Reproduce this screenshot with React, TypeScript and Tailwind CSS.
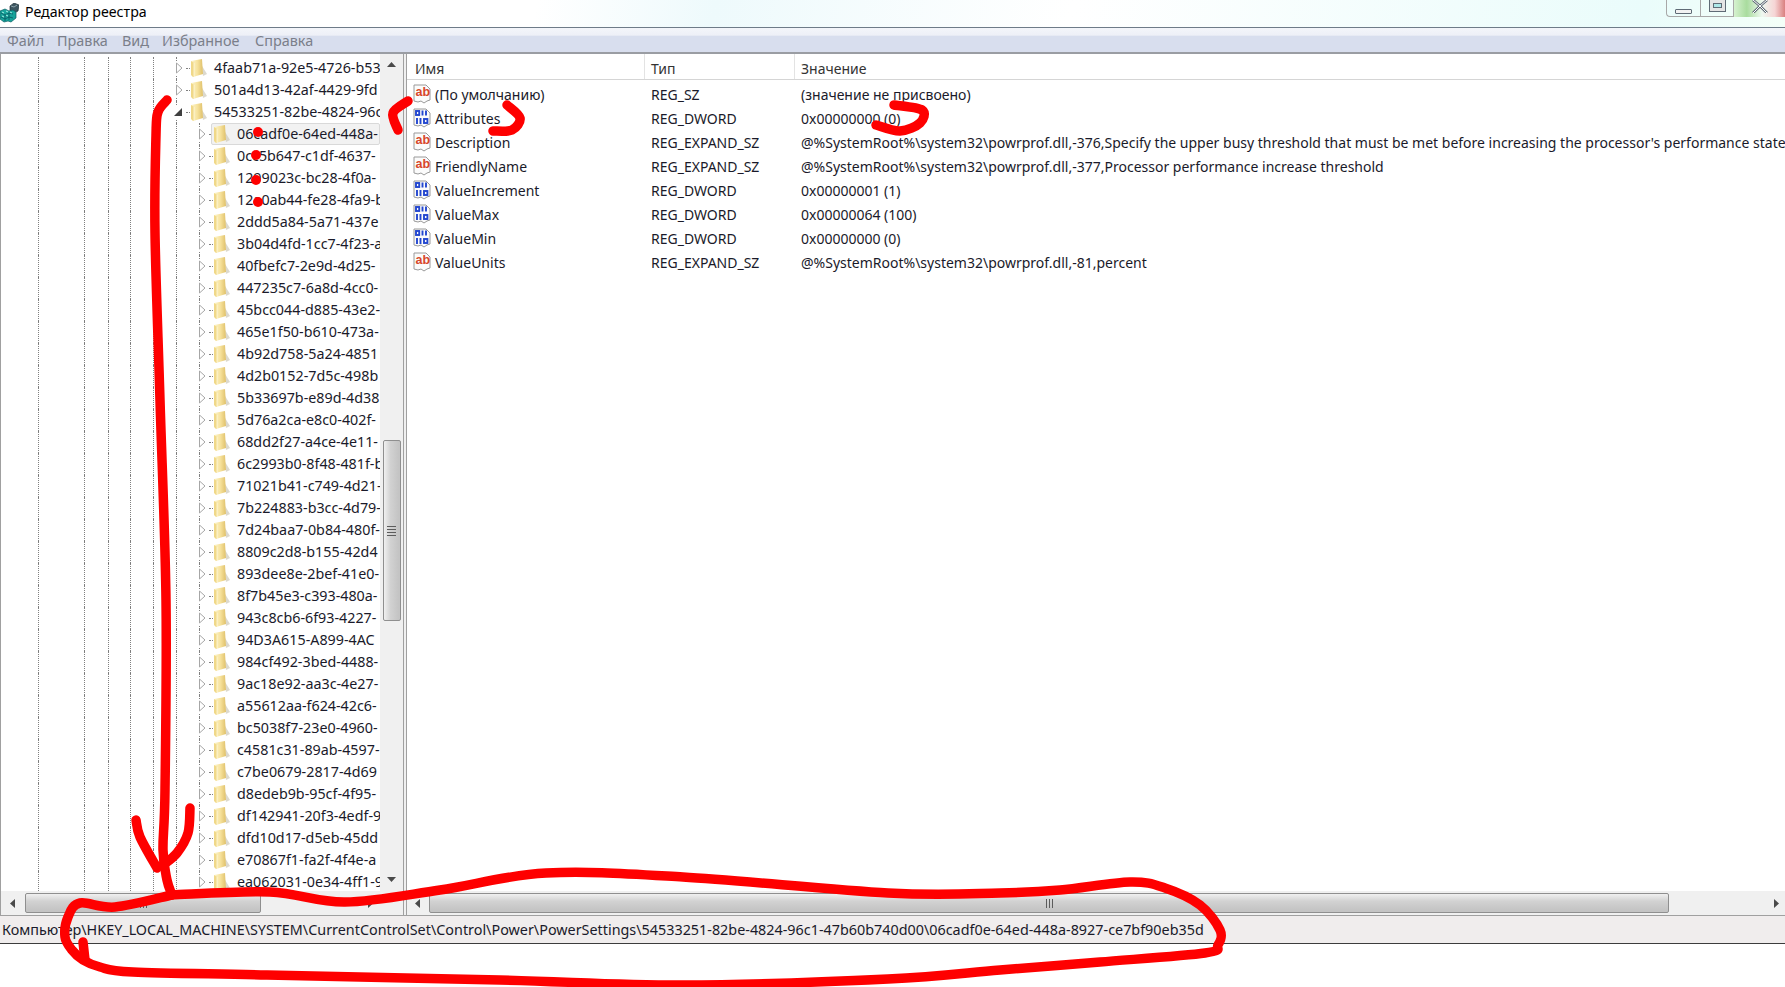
const topRows = ['4faab71a-92e5-4726-b53', '501a4d13-42af-4429-9fd', '54533251-82be-4824-96c']
const childRows = [
  '06cadf0e-64ed-448a-', '0cc5b647-c1df-4637-', '1299023c-bc28-4f0a-', '12a0ab44-fe28-4fa9-b', '2ddd5a84-5a71-437e',
  '3b04d4fd-1cc7-4f23-a', '40fbefc7-2e9d-4d25-', '447235c7-6a8d-4cc0-', '45bcc044-d885-43e2-', '465e1f50-b610-473a-',
  '4b92d758-5a24-4851', '4d2b0152-7d5c-498b', '5b33697b-e89d-4d38', '5d76a2ca-e8c0-402f-', '68dd2f27-a4ce-4e11-',
  '6c2993b0-8f48-481f-b', '71021b41-c749-4d21-', '7b224883-b3cc-4d79-', '7d24baa7-0b84-480f-', '8809c2d8-b155-42d4',
  '893dee8e-2bef-41e0-', '8f7b45e3-c393-480a-', '943c8cb6-6f93-4227-', '94D3A615-A899-4AC', '984cf492-3bed-4488-',
  '9ac18e92-aa3c-4e27-', 'a55612aa-f624-42c6-', 'bc5038f7-23e0-4960-', 'c4581c31-89ab-4597-', 'c7be0679-2817-4d69',
  'd8edeb9b-95cf-4f95-', 'df142941-20f3-4edf-9', 'dfd10d17-d5eb-45dd', 'e70867f1-fa2f-4f4e-a', 'ea062031-0e34-4ff1-9',
]

const values = [
  { name: '(По умолчанию)', type: 'REG_SZ', value: '(значение не присвоено)', text: true },
  { name: 'Attributes', type: 'REG_DWORD', value: '0x00000000 (0)', text: false },
  { name: 'Description', type: 'REG_EXPAND_SZ', value: "@%SystemRoot%\\system32\\powrprof.dll,-376,Specify the upper busy threshold that must be met before increasing the processor's performance state.", text: true },
  { name: 'FriendlyName', type: 'REG_EXPAND_SZ', value: '@%SystemRoot%\\system32\\powrprof.dll,-377,Processor performance increase threshold', text: true },
  { name: 'ValueIncrement', type: 'REG_DWORD', value: '0x00000001 (1)', text: false },
  { name: 'ValueMax', type: 'REG_DWORD', value: '0x00000064 (100)', text: false },
  { name: 'ValueMin', type: 'REG_DWORD', value: '0x00000000 (0)', text: false },
  { name: 'ValueUnits', type: 'REG_EXPAND_SZ', value: '@%SystemRoot%\\system32\\powrprof.dll,-81,percent', text: true },
]

const menu = [
  { label: 'Файл', w: 'w-[50px]' },
  { label: 'Правка', w: 'w-[65px]' },
  { label: 'Вид', w: 'w-[40px]' },
  { label: 'Избранное', w: 'w-[93px]' },
  { label: 'Справка', w: 'w-[80px]' },
]

function AppIcon() {
  return (
    <svg width="19" height="20" viewBox="0 0 19 20" className="-mt-[2px] shrink-0">
      <path d="M10 3l4-3 5 2-1 6-4 2-4-2z" fill="#3d5560" stroke="#1f3038" strokeWidth="0.7" />
      <path d="M11 3l3 1 3-2" fill="none" stroke="#9db4bb" strokeWidth="0.8" />
      <path d="M0 8l5-2 4 2 4-1 3 2v6l-5 4-3-1-4 1-4-3z" fill="#17a39a" stroke="#0b5d63" strokeWidth="0.7" />
      <path d="M1 10l4 2 4-2 4 1M5 12v6M9 10v7M1 14l4 2 4-2 4 1" fill="none" stroke="#0a5f66" strokeWidth="0.9" />
      <path d="M2 9l2 1M6 8l2 1M10 9l2 1M2 13l2 1M6 12l2 1" stroke="#a4f2e6" strokeWidth="1" />
    </svg>
  )
}

function Folder() {
  return (
    <svg width="17" height="18" viewBox="0 0 17 18" className="shrink-0">
      <defs>
        <linearGradient id="fold" x1="0" y1="0" x2="1" y2="0">
          <stop offset="0" stopColor="#fdf6cf" />
          <stop offset="0.55" stopColor="#f6e19a" />
          <stop offset="1" stopColor="#dfc06a" />
        </linearGradient>
      </defs>
      <path d="M12 7l5 8-4 2z" fill="#c9c4b4" opacity="0.65" />
      <path d="M1 2l11-2 1 15-10 3z" fill="url(#fold)" />
      <path d="M1 2l3 2v14l-1 0-2-2z" fill="#f0d888" />
      <path d="M4 4v14" stroke="#fff9dc" strokeWidth="0.8" />
    </svg>
  )
}

function Expander({ open }: { open?: boolean }) {
  if (open) {
    return (
      <svg width="9" height="14" viewBox="0 0 9 14" className="-ml-[3px] bg-white">
        <path d="M8 3v8H0z" fill="#404040" />
      </svg>
    )
  }
  return (
    <svg width="8" height="14" viewBox="0 0 8 14" className="-ml-[1px] bg-white">
      <path d="M0.5 2L6 7l-5.5 5z" fill="#fff" stroke="#a6a6a6" />
    </svg>
  )
}

function Guides({ child }: { child: boolean }) {
  return (
    <div className="flex h-full shrink-0">
      <div className="w-[38px]" />
      <div className="w-[46px] border-l border-dotted border-[#808080]" />
      <div className="w-[24px] border-l border-dotted border-[#808080]" />
      <div className="w-[22px] border-l border-dotted border-[#808080]" />
      <div className="w-[23px] border-l border-dotted border-[#808080]" />
      <div className="w-[23px] border-l border-dotted border-[#808080]" />
      {child && <div className="w-[23px] border-l border-dotted border-[#808080]" />}
    </div>
  )
}

function TreeRow({ label, child, open, selected }: { label: string; child?: boolean; open?: boolean; selected?: boolean }) {
  return (
    <div className="flex h-[22px] items-center whitespace-nowrap">
      <Guides child={!!child} />
      <div className="flex h-full w-[10px] shrink-0 items-center border-l border-dotted border-[#808080]">
        <Expander open={open} />
      </div>
      <div className={`shrink-0 border-t border-dotted border-[#808080] ${selected ? 'w-[2px]' : 'w-[4px]'}`} />
      <div className={`flex h-[22px] flex-1 items-center ${selected ? 'rounded-[2px] border border-[#d9d9d9] bg-[#f2f2f2] pl-[1px]' : ''}`}>
        <Folder />
        <span className="ml-[7px] text-[14.3px] text-[#1a1a2a]">{label}</span>
      </div>
    </div>
  )
}

function TextIcon() {
  return (
    <svg width="18" height="20" viewBox="0 0 18 20" className="shrink-0">
      <path d="M1 1h12l4 4v11l-3 1-3 2-3-2-3 1-4-1z" fill="#fbfbfb" stroke="#9a9a9a" />
      <text x="2.5" y="12" fontSize="12.5" fontWeight="700" fill="#d8472a" fontFamily="'Liberation Sans', sans-serif">ab</text>
    </svg>
  )
}

function BinIcon() {
  return (
    <svg width="18" height="20" viewBox="0 0 18 20" className="shrink-0">
      <path d="M1 1h12l4 4v11l-3 1-3 2-3-2-3 1-4-1z" fill="#fbfbfb" stroke="#9a9a9a" />
      <g fill="none" stroke="#2347cf" strokeWidth="1.9">
        <rect x="3" y="3" width="3.2" height="4" />
        <path d="M9.5 2.5v5M13 2.5v5" />
        <path d="M4 10v6M7.5 10v6" />
        <rect x="11" y="11" width="3.4" height="4" />
      </g>
    </svg>
  )
}

function ScrollArrow({ dir }: { dir: 'up' | 'down' | 'left' | 'right' }) {
  const d = { up: 'M0 6L4.5 1 9 6z', down: 'M0 1l9 0-4.5 5z', left: 'M6 0v9L1 4.5z', right: 'M1 0v9l5-4.5z' }[dir]
  return (
    <svg width="9" height="9" viewBox="0 0 9 9">
      <path d={d} fill="#4a4a4a" />
    </svg>
  )
}

function GripV() {
  return (
    <div className="flex w-[9px] flex-col gap-[2px]">
      <div className="h-[1px] bg-[#5c5c5c]" />
      <div className="h-[1px] bg-[#5c5c5c]" />
      <div className="h-[1px] bg-[#5c5c5c]" />
      <div className="h-[1px] bg-[#5c5c5c]" />
    </div>
  )
}

function GripH() {
  return (
    <div className="flex h-[9px] gap-[2px]">
      <div className="w-[1px] bg-[#5c5c5c]" />
      <div className="w-[1px] bg-[#5c5c5c]" />
      <div className="w-[1px] bg-[#5c5c5c]" />
    </div>
  )
}

function toPath(pts: number[][]) {
  let d = `M${pts[0][0]} ${pts[0][1]}`
  for (let i = 0; i < pts.length - 1; i++) {
    const p0 = pts[i - 1] || pts[i]
    const p1 = pts[i]
    const p2 = pts[i + 1]
    const p3 = pts[i + 2] || p2
    d += `C${p1[0] + (p2[0] - p0[0]) / 6} ${p1[1] + (p2[1] - p0[1]) / 6} ${p2[0] - (p3[0] - p1[0]) / 6} ${p2[1] - (p3[1] - p1[1]) / 6} ${p2[0]} ${p2[1]}`
  }
  return d
}

// hand-drawn marks on top of the screenshot
const strokes = [
  [[167, 100], [158, 112], [156, 135], [155, 233], [160, 400], [166, 600], [165, 790], [163, 850], [167, 880], [172, 895]],
  [[136, 820], [140, 837], [157, 868]],
  [[190, 808], [188, 833], [177, 853], [163, 865]],
  [[172, 895], [270, 892], [345, 902], [440, 890], [546, 873], [683, 877], [888, 893], [1000, 893], [1060, 890], [1130, 882], [1165, 888], [1200, 905], [1220, 930], [1218, 945], [1205, 953], [1100, 962], [1000, 970], [888, 979], [683, 985], [500, 980], [267, 975], [133, 972], [100, 967], [83, 960], [72, 950], [65, 937], [68, 917], [80, 903], [115, 907], [172, 895]],
  [[83, 942], [85, 960]],
  [[408, 101], [393, 113], [398, 130]],
  [[507, 105], [520, 118], [512, 130], [493, 131]],
  [[894, 105], [922, 110], [920, 123], [900, 131], [876, 125]],
]

function Marks() {
  return (
    <svg className="pointer-events-none absolute inset-0" width="1785" height="987">
      {strokes.map((s, i) => (
        <path key={i} d={toPath(s)} fill="none" stroke="#fe0000" strokeWidth="9.5" strokeLinecap="round" strokeLinejoin="round" />
      ))}
      <circle cx="258" cy="132" r="5" fill="#fe0000" />
      <circle cx="256" cy="155" r="5" fill="#fe0000" />
      <circle cx="256" cy="180" r="5" fill="#fe0000" />
      <circle cx="258" cy="202" r="5" fill="#fe0000" />
    </svg>
  )
}

export default function App() {
  return (
    <div className="relative flex h-[987px] w-[1785px] flex-col overflow-hidden bg-white font-['Noto_Sans',sans-serif] text-[14px] text-[#1a1a2a]">
      {/* title bar */}
      <div className="flex h-[28px] shrink-0 items-center border-b border-[#6e7b88] bg-[linear-gradient(100deg,#ffffff_0%,#ffffff_30%,#eefafc_40%,#ffffff_60%,#eafcfb_92%,#f4fff8_100%)]">
        <AppIcon />
        <span className="mb-[4px] ml-[6px] text-[14.2px] text-black">Редактор реестра</span>
        <div className="ml-auto flex h-[17px] self-start">
          <div className="flex w-[34px] items-center justify-center rounded-bl-[4px] border-b border-l border-[#a8a8a8] pt-[6px]">
            <div className="h-[5px] w-[17px] rounded-[1px] border border-[#5f6b76] bg-[#f2f2f2]" />
          </div>
          <div className="flex w-[33px] items-end justify-center border-b border-l border-[#a8a8a8] pb-[4px]">
            <div className="flex h-[13px] w-[17px] items-center justify-center border border-t-0 border-[#5f6b76] bg-[#e5e5e5]">
              <div className="h-[5px] w-[9px] border border-[#5f6b76] bg-[#aee6e6]" />
            </div>
          </div>
          <div className="flex w-[52px] items-start justify-center border-l border-[#a8a8a8] bg-[linear-gradient(90deg,#d6f2d0_0%,#a9dc9e_25%,#eef8f0_55%,#f6d5d5_80%,#d98080_100%)]">
            <svg width="16" height="13" viewBox="0 0 16 13">
              <path d="M1 0l7 6 7-6M1 13l7-7 7 7" fill="none" stroke="#5f6b76" strokeWidth="2.5" />
              <path d="M1 0l7 6 7-6M1 13l7-7 7 7" fill="none" stroke="#fff" strokeWidth="1" />
            </svg>
          </div>
        </div>
      </div>

      {/* menu */}
      <div className="flex h-[26px] shrink-0 items-center border-b-2 border-[#9a9da3] bg-[linear-gradient(180deg,#f3f5fa_0%,#eef0f7_30%,#d8deee_34%,#d8deee_100%)] pl-[7px] pt-[2px] text-[14.4px] text-[#7b7f8a]">
        {menu.map((m) => (
          <span key={m.label} className={m.w}>{m.label}</span>
        ))}
      </div>

      {/* panes */}
      <div className="flex h-[861px] shrink-0">
        <div className="flex w-[403px] shrink-0 flex-col border-l border-[#a0a0a0]">
          <div className="flex h-[837px] shrink-0">
            <div className="-ml-[1px] w-[380px] shrink-0 overflow-hidden pt-[3px]">
              {topRows.map((r, i) => (
                <TreeRow key={r} label={r} open={i === 2} />
              ))}
              {childRows.map((r, i) => (
                <TreeRow key={r} label={r} child selected={i === 0} />
              ))}
            </div>
            <div className="flex w-[23px] shrink-0 flex-col items-center bg-[#f0f0f0]">
              <div className="flex h-[22px] w-full items-center justify-center">
                <ScrollArrow dir="up" />
              </div>
              <div className="mt-[364px] flex h-[181px] w-[18px] items-center justify-center rounded-[2px] border border-[#8f8f8f] bg-[linear-gradient(90deg,#f0f0f0,#d2d2d2_40%,#c4c4c4_90%)]">
                <GripV />
              </div>
              <div className="mt-auto flex h-[22px] w-full items-center justify-center">
                <ScrollArrow dir="down" />
              </div>
            </div>
          </div>
          <div className="flex h-[24px] items-center bg-[#f0f0f0]">
            <div className="flex w-[24px] shrink-0 justify-center">
              <ScrollArrow dir="left" />
            </div>
            <div className="flex h-[20px] w-[236px] shrink-0 items-center justify-center rounded-[2px] border border-[#8f8f8f] bg-[linear-gradient(180deg,#f0f0f0,#d2d2d2_40%,#c4c4c4_90%)]">
              <GripH />
            </div>
            <div className="flex flex-1 justify-end pr-[27px]">
              <ScrollArrow dir="right" />
            </div>
          </div>
        </div>

        <div className="w-[4px] shrink-0 border-x border-[#a0a0a0] bg-[#f0f0f0]" />

        <div className="flex min-w-0 flex-1 flex-col">
          <div className="flex h-[26px] shrink-0 items-center border-b border-[#d5d5d5] text-[14px] text-[#333]">
            <div className="h-full w-[238px] shrink-0 border-r border-[#e3e3e3] pl-[8px] pt-[2px] leading-[26px]">Имя</div>
            <div className="h-full w-[150px] shrink-0 border-r border-[#e3e3e3] pl-[6px] pt-[2px] leading-[26px]">Тип</div>
            <div className="h-full pl-[6px] pt-[2px] leading-[26px]">Значение</div>
          </div>
          <div className="min-h-0 flex-1 overflow-hidden pt-[2px]">
            {values.map((v) => (
              <div key={v.name} className="flex h-[24px] items-center whitespace-nowrap">
                <div className="flex w-[238px] shrink-0 items-center pl-[6px]">
                  {v.text ? <TextIcon /> : <BinIcon />}
                  <span className="ml-[4px]">{v.name}</span>
                </div>
                <div className="w-[150px] shrink-0 pl-[6px]">{v.type}</div>
                <div className="pl-[6px]">{v.value}</div>
              </div>
            ))}
          </div>
          <div className="flex h-[24px] shrink-0 items-center bg-[#f0f0f0]">
            <div className="flex w-[22px] shrink-0 justify-center">
              <ScrollArrow dir="left" />
            </div>
            <div className="flex h-[20px] w-[1240px] shrink-0 items-center justify-center rounded-[2px] border border-[#8f8f8f] bg-[linear-gradient(180deg,#f0f0f0,#d2d2d2_40%,#c4c4c4_90%)]">
              <GripH />
            </div>
            <div className="flex flex-1 justify-end pr-[3px]">
              <ScrollArrow dir="right" />
            </div>
          </div>
        </div>
      </div>

      {/* status bar */}
      <div className="flex h-[29px] shrink-0 items-center whitespace-nowrap border-y border-t-[#a0a0a0] border-b-[#3c3c3c] bg-[#f0eded] pl-[2px] text-[14.36px] text-[#1a1a2a]">
        Компьютер\HKEY_LOCAL_MACHINE\SYSTEM\CurrentControlSet\Control\Power\PowerSettings\54533251-82be-4824-96c1-47b60b740d00\06cadf0e-64ed-448a-8927-ce7bf90eb35d
      </div>

      <Marks />
    </div>
  )
}
